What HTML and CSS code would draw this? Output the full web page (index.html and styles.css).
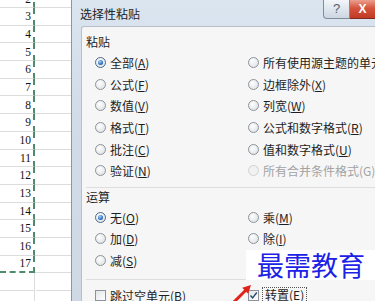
FILE: index.html
```html
<!DOCTYPE html>
<html>
<head>
    <title>选择性粘贴</title>
    <link rel="stylesheet" href="styles.css">
</head>
<body>
<div class="screen">
    <!-- Worksheet behind the dialog -->
    <div class="sheet">
        <div class="rows">
            <div class="row"><span class="cell">2</span><span class="fill"></span></div>
            <div class="row"><span class="cell">3</span><span class="fill"></span></div>
            <div class="row"><span class="cell">4</span><span class="fill"></span></div>
            <div class="row"><span class="cell">5</span><span class="fill"></span></div>
            <div class="row"><span class="cell">6</span><span class="fill"></span></div>
            <div class="row"><span class="cell">7</span><span class="fill"></span></div>
            <div class="row"><span class="cell">8</span><span class="fill"></span></div>
            <div class="row"><span class="cell">9</span><span class="fill"></span></div>
            <div class="row"><span class="cell">10</span><span class="fill"></span></div>
            <div class="row"><span class="cell">11</span><span class="fill"></span></div>
            <div class="row"><span class="cell">12</span><span class="fill"></span></div>
            <div class="row"><span class="cell">13</span><span class="fill"></span></div>
            <div class="row"><span class="cell">14</span><span class="fill"></span></div>
            <div class="row"><span class="cell">15</span><span class="fill"></span></div>
            <div class="row"><span class="cell">16</span><span class="fill"></span></div>
            <div class="row last"><span class="cell">17</span><span class="fill"></span></div>
            <div class="row after"><span class="cell"></span><span class="fill"></span></div>
            <div class="row after"><span class="cell"></span><span class="fill"></span></div>
        </div>
    </div>

    <!-- Paste Special dialog -->
    <div class="dialog">
        <div class="titlebar">
            <span class="title">选择性粘贴</span>
            <span class="title-buttons">
                <span class="btn-help">?</span>
                <span class="btn-close">X</span>
            </span>
        </div>
        <div class="client">
            <div class="group-label">粘贴</div>
            <div class="options paste">
                <div class="opt"><span class="radio on"></span>全部(<u>A</u>)</div>
                <div class="opt"><span class="radio"></span>所有使用源主题的单元(<u>H</u>)</div>
                <div class="opt"><span class="radio"></span>公式(<u>F</u>)</div>
                <div class="opt"><span class="radio"></span>边框除外(<u>X</u>)</div>
                <div class="opt"><span class="radio"></span>数值(<u>V</u>)</div>
                <div class="opt"><span class="radio"></span>列宽(<u>W</u>)</div>
                <div class="opt"><span class="radio"></span>格式(<u>T</u>)</div>
                <div class="opt"><span class="radio"></span>公式和数字格式(<u>R</u>)</div>
                <div class="opt"><span class="radio"></span>批注(<u>C</u>)</div>
                <div class="opt"><span class="radio"></span>值和数字格式(<u>U</u>)</div>
                <div class="opt"><span class="radio"></span>验证(<u>N</u>)</div>
                <div class="opt disabled"><span class="radio"></span>所有合并条件格式(G)</div>
            </div>
            <div class="sep"></div>
            <div class="group-label">运算</div>
            <div class="options ops">
                <div class="opt"><span class="radio on"></span>无(<u>O</u>)</div>
                <div class="opt"><span class="radio"></span>乘(<u>M</u>)</div>
                <div class="opt"><span class="radio"></span>加(<u>D</u>)</div>
                <div class="opt"><span class="radio"></span>除(<u>I</u>)</div>
                <div class="opt"><span class="radio"></span>减(<u>S</u>)</div>
            </div>
            <div class="sep"></div>
            <div class="options checks">
                <div class="opt"><span class="check"></span>跳过空单元(<u>B</u>)</div>
                <div class="opt"><span class="check on"><svg viewBox="0 0 9 9" width="9" height="9"><path d="M1.5 4.5 L3.6 7 L7.8 1.5" fill="none" stroke="#2b4a6e" stroke-width="1.4"/></svg></span><span class="focus">转置(<u>E</u>)</span></div>
            </div>

            <!-- watermark over the dialog -->
            <div class="watermark">最需教育</div>
        </div>
    </div>

    <!-- red pointer arrow -->
    <svg class="arrow" width="26" height="20" viewBox="0 0 26 20">
        <line x1="3" y1="21" x2="17" y2="7" stroke="#e0241c" stroke-width="3"/>
        <polygon points="22,2 19.2,10.8 13.2,4.8" fill="#e0241c"/>
    </svg>
</div>
</body>
</html>
```

FILE: styles.css
```css
* {
    box-sizing: border-box;
}
body {
    margin: 0;
    width: 375px;
    height: 301px;
    overflow: hidden;
    background: #fff;
    font-family: "Noto Sans CJK SC", sans-serif;
    font-size: 12px;
    color: #1e1e1e;
}
.screen {
    display: flex;
    height: 301px;
    position: relative;
}

/* worksheet */
.sheet {
    width: 71px;
    flex: none;
    overflow: hidden;
}
.rows {
    margin-top: -9.7px;
}
.row {
    display: flex;
    height: 17.7px;
}
.cell {
    width: 35px;
    flex: none;
    display: flex;
    align-items: flex-end;
    justify-content: flex-end;
    padding: 0 2px 2px 0;
    border-right: 2px dashed #4f8a6b;
    border-bottom: 1px solid #dcdcdc;
    font-family: "Liberation Serif", serif;
    font-size: 11.5px;
    line-height: 1;
    color: #111;
}
.fill {
    flex: 1;
    border-bottom: 1px solid #dcdcdc;
}
.row.last .cell {
    border-bottom: 2px dashed #4f8a6b;
}
.row.after .cell {
    border-right: 1px solid #dcdcdc;
    margin-right: 1px;
}

/* dialog frame */
.dialog {
    flex: 1;
    min-width: 0;
    display: flex;
    flex-direction: column;
    border-left: 1px solid #8896a5;
    background: linear-gradient(#dbe5f0, #d2dce8 40%, #cfd9e4);
}
.titlebar {
    height: 26px;
    flex: none;
    display: flex;
    align-items: flex-start;
    padding-left: 8px;
}
.title {
    line-height: 27px;
    color: #222;
}
.title-buttons {
    margin-left: auto;
    display: flex;
}
.btn-help {
    width: 27px;
    height: 19px;
    border: 1px solid #7f8d9c;
    border-top: none;
    border-radius: 0 0 0 4px;
    background: linear-gradient(#f3f6fa, #dfe6ee 50%, #cdd6e1);
    font-family: "Liberation Sans", sans-serif;
    font-size: 13px;
    line-height: 17px;
    text-align: center;
    color: #55606c;
}
.btn-close {
    width: 25px;
    height: 19px;
    border-bottom: 1px solid #7c2b22;
    background: linear-gradient(#eba08f, #d5543d 45%, #c23a24);
    font-family: "Liberation Sans", sans-serif;
    font-weight: bold;
    font-size: 12px;
    line-height: 18px;
    text-align: center;
    color: #fff;
}

/* dialog body */
.client {
    flex: 1;
    margin-left: 9px;
    padding: 7px 0 0 4px;
    border-top: 1px solid #b7c0ca;
    border-left: 1px solid #b7c0ca;
    border-top-left-radius: 3px;
    background: #f6f6f6;
    position: relative;
    overflow: hidden;
}
.group-label {
    line-height: 16px;
    color: #1e1e1e;
}
.options {
    display: grid;
    grid-template-columns: 153px 1fr;
    grid-auto-rows: 21.6px;
    margin: 2px 0 0 9px;
}
.opt {
    display: flex;
    align-items: center;
    white-space: nowrap;
}
.opt u {
    text-decoration-thickness: 1px;
    text-underline-offset: 1px;
}
.opt.disabled {
    color: #a3a3a3;
}
.radio {
    width: 11px;
    height: 11px;
    flex: none;
    margin-right: 4px;
    border-radius: 50%;
    border: 1px solid #8d939b;
    background: radial-gradient(circle at 40% 35%, #ffffff, #d9dbde);
    position: relative;
}
.radio.on {
    border-color: #4a6a8c;
}
.radio.on::after {
    content: "";
    position: absolute;
    left: 2px;
    top: 2px;
    width: 5px;
    height: 5px;
    border-radius: 50%;
    background: radial-gradient(circle at 40% 35%, #a8d6ff, #2a6cc0 60%, #17447a);
}
.opt.disabled .radio {
    border-color: #cfd2d6;
    background: #f1f1f1;
}
.sep {
    height: 1px;
    background: #dedede;
    margin: 5px 0 1px;
}
.ops {
    margin-top: 2px;
}
.sep + .checks {
    margin-top: 4px;
}
.ops + .sep {
    margin: 8px 0 0;
}
.checks {
    grid-auto-rows: 22px;
}
.check {
    width: 11px;
    height: 11px;
    flex: none;
    margin-right: 4px;
    border: 1px solid #8d939b;
    background: linear-gradient(135deg, #e2e4e7, #ffffff);
    display: flex;
    align-items: center;
    justify-content: center;
}
.focus {
    border: 1px dotted #555;
    padding: 0 2px;
    line-height: 14px;
    margin-left: -1px;
}

/* overlays */
.watermark {
    position: absolute;
    left: 164px;
    top: 223px;
    width: 140px;
    height: 30px;
    padding-left: 11px;
    background: #fff;
    font-size: 27px;
    line-height: 30px;
    color: #1c22e6;
    white-space: nowrap;
}
.arrow {
    position: absolute;
    left: 229px;
    top: 283px;
}
```
